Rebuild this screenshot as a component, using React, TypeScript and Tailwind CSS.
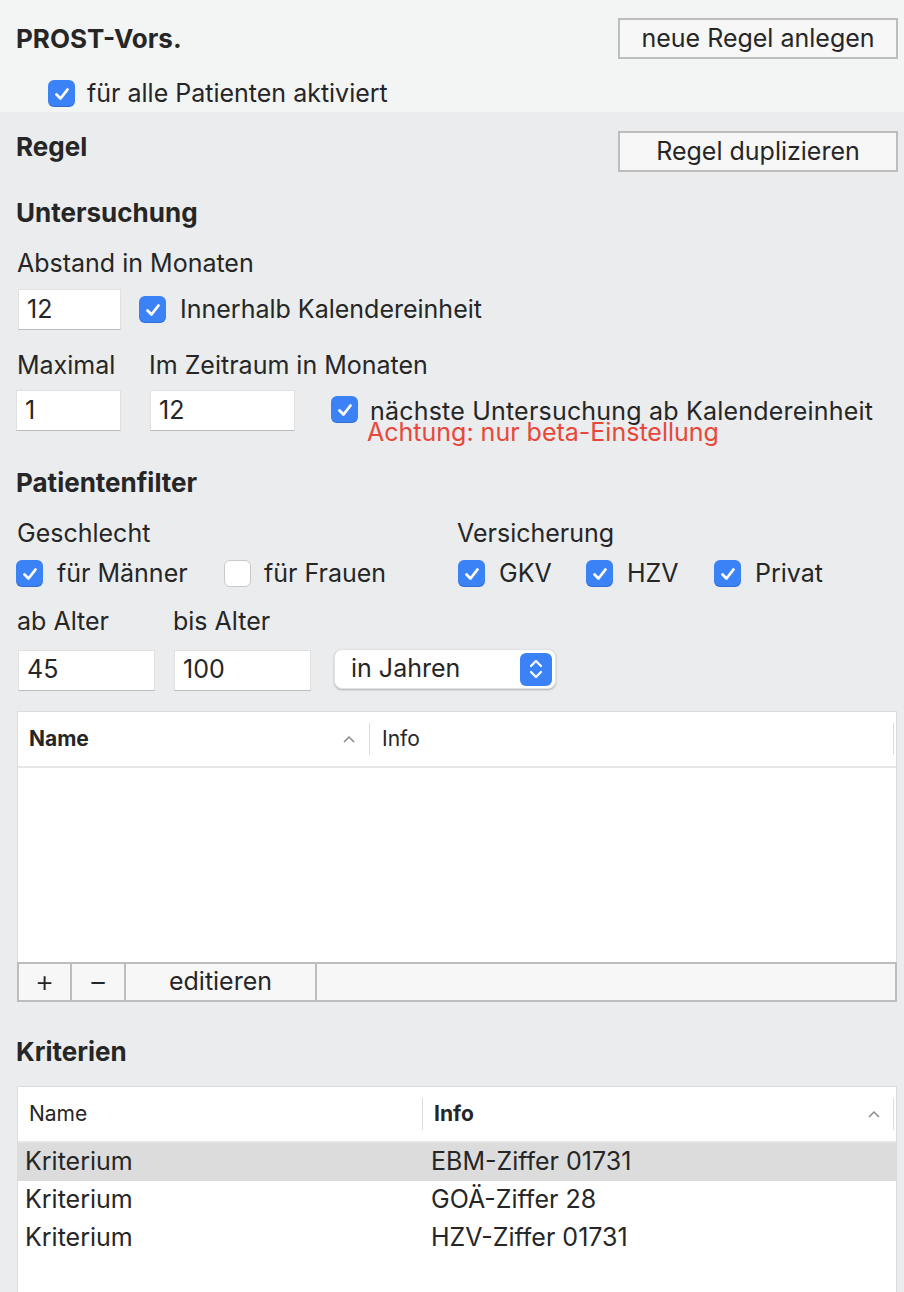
import React from "react";

const font = { fontFamily: "Inter, 'Liberation Sans', sans-serif" };

function Check({ on = true }: { on?: boolean }) {
  if (!on) {
    return <div className="w-[27px] h-[27px] shrink-0 rounded-[6px] bg-white border border-[#c9c9c9]" />;
  }
  return (
    <div className="w-[27px] h-[27px] shrink-0 rounded-[6px] bg-[#3b82f6] flex items-center justify-center shadow-[inset_0_-1px_0_rgba(0,0,0,0.15)]">
      <svg width="18" height="18" viewBox="0 0 18 18" fill="none">
        <path d="M3.5 9.5 L7.5 13.5 L14.5 4.5" stroke="white" strokeWidth="2.8" strokeLinecap="round" strokeLinejoin="round" />
      </svg>
    </div>
  );
}

function Field({ value, w }: { value: string; w: string }) {
  return (
    <div className={`${w} h-[41px] bg-white border border-[#e0e0e0] border-b-[#bcbcbc] pl-[8px] flex items-center text-[25px]`}>
      {value}
    </div>
  );
}

function Btn({ label }: { label: string }) {
  return (
    <div className="w-[280px] h-[41px] border-2 border-[#bdbdbd] bg-[#f7f7f7] flex items-center justify-center text-[25px]">
      {label}
    </div>
  );
}

function Caret() {
  return (
    <svg width="14" height="10" viewBox="0 0 14 10" fill="none">
      <path d="M2 8 L7 3 L12 8" stroke="#8a8a8a" strokeWidth="1.5" />
    </svg>
  );
}

export default function App() {
  return (
    <div style={font} className="w-[904px] h-[1292px] overflow-hidden bg-[#eaeced] text-[#262626] text-[25px]">
      <div className="h-[112px] bg-[#f3f4f4] pt-[18px]">
        <div className="flex items-center justify-between pl-[16px] pr-[6px]">
          <div className="text-[26px] font-bold">PROST-Vors.</div>
          <Btn label="neue Regel anlegen" />
        </div>
        <div className="flex items-center gap-[12px] pl-[48px] mt-[16px]">
          <Check />
          <span>für alle Patienten aktiviert</span>
        </div>
      </div>

      <div className="flex items-start justify-between pl-[16px] pr-[6px] pt-[19px]">
        <div className="text-[26px] font-bold leading-[30px] mt-[1px]">Regel</div>
        <Btn label="Regel duplizieren" />
      </div>

      <div className="pl-[16px] mt-[26px] text-[26px] font-bold leading-[30px]">Untersuchung</div>
      <div className="pl-[17px] mt-[20px] leading-[30px]">Abstand in Monaten</div>
      <div className="flex items-center pl-[18px] mt-[11px]">
        <Field value="12" w="w-[103px]" />
        <div className="ml-[18px] flex items-center gap-[14px]">
          <Check />
          <span>Innerhalb Kalendereinheit</span>
        </div>
      </div>

      <div className="flex pl-[17px] mt-[20px] leading-[30px]">
        <span className="w-[132px]">Maximal</span>
        <span>Im Zeitraum in Monaten</span>
      </div>
      <div className="flex items-start pl-[16px] mt-[10px]">
        <Field value="1" w="w-[105px]" />
        <div className="ml-[29px]">
          <Field value="12" w="w-[145px]" />
        </div>
        <div className="ml-[36px] mt-[6px] flex items-start gap-[12px]">
          <Check />
          <div>
            <div className="leading-[26px] mt-[2px] tracking-[0.2px]">nächste Untersuchung ab Kalendereinheit</div>
            <div className="leading-[20px] text-[#e8473b] -ml-[3px] -mt-[2px]">Achtung: nur beta-Einstellung</div>
          </div>
        </div>
      </div>

      <div className="pl-[16px] mt-[26px] text-[26px] font-bold leading-[30px]">Patientenfilter</div>
      <div className="flex pl-[17px] mt-[20px] leading-[30px]">
        <span className="w-[440px]">Geschlecht</span>
        <span>Versicherung</span>
      </div>
      <div className="flex items-center pl-[16px] mt-[7px]">
        <div className="flex items-center gap-[14px] w-[208px]">
          <Check />
          <span>für Männer</span>
        </div>
        <div className="flex items-center gap-[13px] w-[234px]">
          <Check on={false} />
          <span>für Frauen</span>
        </div>
        <div className="flex items-center gap-[14px] w-[128px]">
          <Check />
          <span>GKV</span>
        </div>
        <div className="flex items-center gap-[14px] w-[128px]">
          <Check />
          <span>HZV</span>
        </div>
        <div className="flex items-center gap-[14px]">
          <Check />
          <span>Privat</span>
        </div>
      </div>

      <div className="flex pl-[17px] mt-[13px] leading-[30px]">
        <span className="w-[156px]">ab Alter</span>
        <span>bis Alter</span>
      </div>
      <div className="flex items-center pl-[18px] mt-[14px]">
        <Field value="45" w="w-[137px]" />
        <div className="ml-[19px]">
          <Field value="100" w="w-[137px]" />
        </div>
        <div className="ml-[23px] w-[222px] h-[40px] rounded-[8px] bg-white shadow-[0_1px_2px_rgba(0,0,0,0.25)] border border-[#e2e2e2] flex items-center justify-between pl-[16px] pr-[3px] -mt-[2px]">
          <span>in Jahren</span>
          <div className="w-[32px] h-[33px] rounded-[6px] bg-[#3b82f6] flex items-center justify-center">
            <svg width="16" height="24" viewBox="0 0 16 24" fill="none">
              <path d="M3 9 L8 4 L13 9" stroke="white" strokeWidth="2.2" strokeLinecap="round" strokeLinejoin="round" />
              <path d="M3 15 L8 20 L13 15" stroke="white" strokeWidth="2.2" strokeLinecap="round" strokeLinejoin="round" />
            </svg>
          </div>
        </div>
      </div>

      <div className="ml-[17px] mt-[20px] w-[880px] h-[291px] border border-[#dcdcdc] bg-white flex flex-col">
        <div className="h-[56px] flex items-center border-b-2 border-[#e6e6e6]">
          <div className="w-[351px] flex items-center justify-between pl-[11px] pr-[13px] text-[21px] font-bold">
            <span>Name</span>
            <Caret />
          </div>
          <div className="w-px h-[32px] bg-[#dcdcdc]" />
          <div className="flex-1 pl-[12px] text-[21px]">Info</div>
          <div className="w-px h-[32px] bg-[#dcdcdc] mr-[2px]" />
        </div>
        <div className="flex-1" />
        <div className="h-[40px] flex border-2 border-[#bdbdbd] bg-[#f7f7f7] -mx-px -mb-px">
          <div className="w-[53px] flex items-center justify-center border-r-2 border-[#bdbdbd] text-[30px] font-light">+</div>
          <div className="w-[54px] flex items-center justify-center border-r-2 border-[#bdbdbd] text-[30px] font-light">−</div>
          <div className="w-[191px] flex items-center justify-center border-r-2 border-[#bdbdbd]">editieren</div>
          <div className="flex-1" />
        </div>
      </div>

      <div className="pl-[16px] mt-[35px] text-[26px] font-bold leading-[30px]">Kriterien</div>

      <div className="ml-[17px] mt-[19px] w-[880px] h-[240px] border border-[#dcdcdc] bg-white">
        <div className="h-[56px] flex items-center border-b-2 border-[#e6e6e6]">
          <div className="w-[404px] pl-[11px] text-[21px]">Name</div>
          <div className="w-px h-[32px] bg-[#dcdcdc]" />
          <div className="flex-1 flex items-center justify-between pl-[11px] pr-[12px] text-[21px] font-bold">
            <span>Info</span>
            <Caret />
          </div>
          <div className="w-px h-[32px] bg-[#dcdcdc] mr-[2px]" />
        </div>
        {[
          ["Kriterium", "EBM-Ziffer 01731", true],
          ["Kriterium", "GOÄ-Ziffer 28", false],
          ["Kriterium", "HZV-Ziffer 01731", false],
        ].map(([n, info, sel], i) => (
          <div key={i} className={`h-[38px] flex items-center ${sel ? "bg-[#dcdcdc]" : ""}`}>
            <span className="w-[413px] pl-[7px]">{n as string}</span>
            <span>{info as string}</span>
          </div>
        ))}
      </div>
    </div>
  );
}
